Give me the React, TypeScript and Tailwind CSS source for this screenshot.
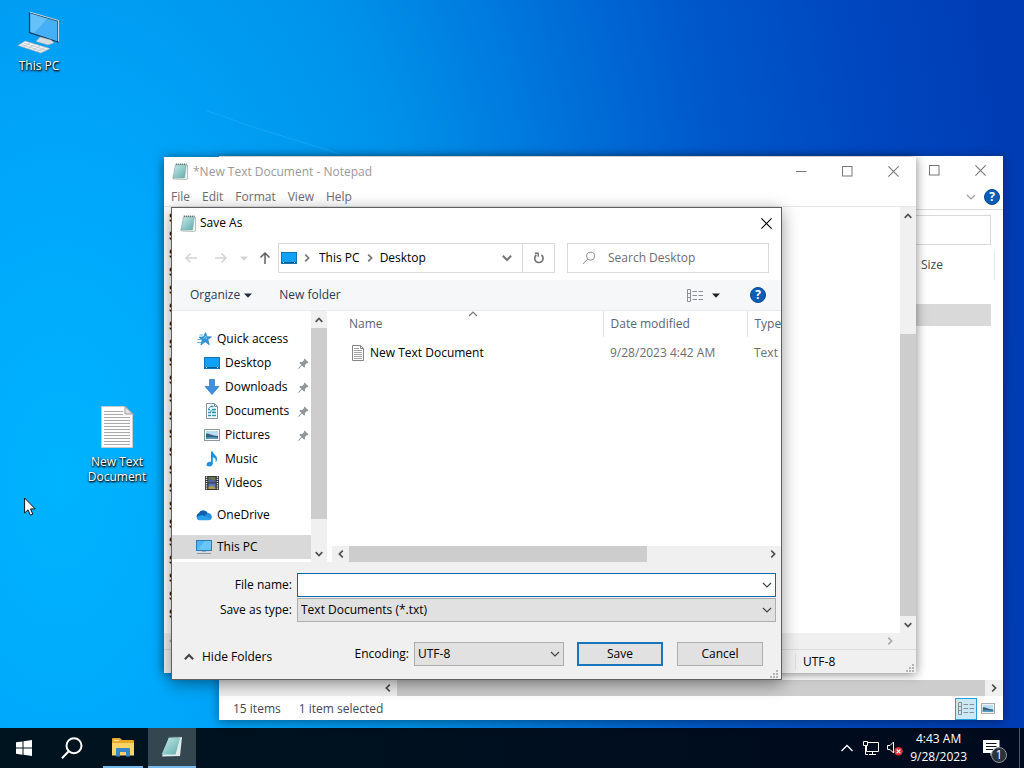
import { ReactNode, useState } from "react";

type IconProps = { className?: string };

type Place = {
  name: string;
  icon: ReactNode;
  pinned?: boolean;
};

// Small line icons

function Chevron({ className = "" }: IconProps) {
  return (
    <svg viewBox="0 0 8 8" className={`h-2 w-2 shrink-0 ${className}`} fill="none" stroke="currentColor">
      <path d="M0.7 2.2 L4 5.6 L7.3 2.2" strokeWidth="1.7" />
    </svg>
  );
}

function ThinChevron({ className = "" }: IconProps) {
  return (
    <svg viewBox="0 0 10 10" className={`h-2.5 w-2.5 shrink-0 ${className}`} fill="none" stroke="currentColor">
      <path d="M1 3 L5 7 L9 3" strokeWidth="1.2" />
    </svg>
  );
}

function Arrow({ className = "" }: IconProps) {
  return (
    <svg viewBox="0 0 14 14" className={`h-3.5 w-3.5 shrink-0 ${className}`} fill="none" stroke="currentColor">
      <path d="M13 7 H2 M6.5 2.5 L2 7 L6.5 11.5" strokeWidth="1.5" />
    </svg>
  );
}

function Triangle({ className = "" }: IconProps) {
  return (
    <svg viewBox="0 0 8 5" className={`h-[5px] w-2 shrink-0 ${className}`} fill="currentColor">
      <path d="M0 0.5 H8 L4 4.7 Z" />
    </svg>
  );
}

function MinimizeIcon() {
  return (
    <svg viewBox="0 0 11 11" className="h-[11px] w-[11px]" stroke="currentColor">
      <path d="M0 5.5 H10.5" />
    </svg>
  );
}

function MaximizeIcon() {
  return (
    <svg viewBox="0 0 11 11" className="h-[11px] w-[11px]" fill="none" stroke="currentColor">
      <rect x="0.5" y="0.5" width="9.5" height="9.5" />
    </svg>
  );
}

function CloseIcon() {
  return (
    <svg viewBox="0 0 11 11" className="h-[11px] w-[11px]" fill="none" stroke="currentColor">
      <path d="M0.4 0.4 L10.6 10.6 M10.6 0.4 L0.4 10.6" strokeWidth="1.1" />
    </svg>
  );
}

function RefreshIcon() {
  return (
    <svg viewBox="0 0 12 12" className="h-3 w-3" fill="none" stroke="#707070">
      <path d="M8.4 3 A4.2 4.2 0 1 1 3.4 3" strokeWidth="1.6" />
      <path d="M1.8 1.2 H5.2 V4.8" strokeWidth="1.4" />
    </svg>
  );
}

function SearchIcon() {
  return (
    <svg viewBox="0 0 14 14" className="h-3.5 w-3.5 shrink-0" fill="none" stroke="#8a8a8a">
      <circle cx="8.6" cy="5.2" r="4" />
      <path d="M5.7 8.2 L1 12.8" />
    </svg>
  );
}

function DetailsIcon() {
  return (
    <svg viewBox="0 0 16 13" className="h-[13px] w-4" fill="none" stroke="#8b8e93">
      <path d="M0.5 0.5 H3.5 V12.5 H0.5 Z M0.5 4.5 H3.5 M0.5 8.5 H3.5" />
      <path d="M5.5 2.5 H10 M11.5 2.5 H16 M5.5 6.5 H10 M11.5 6.5 H16 M5.5 10.5 H10 M11.5 10.5 H16" />
    </svg>
  );
}

function HelpIcon() {
  return (
    <span className="flex h-4 w-4 items-center justify-center rounded-full border border-[#084a92] bg-[#0b5cb5] text-xs leading-none font-bold text-white">
      ?
    </span>
  );
}

function PinIcon() {
  return (
    <svg viewBox="0 0 11 11" className="h-[11px] w-[11px] shrink-0" fill="#8f979d">
      <path d="M6.5 0.5 L10.5 4.5 L9.6 5.2 L8.9 4.9 L7 6.9 L7 9 L6.2 9.7 L4 7.5 L1 10.7 L0.3 10.7 L0.3 10 L3.5 7 L1.4 4.8 L2.1 4 L4.2 4 L6.1 2.1 L5.8 1.3 Z" />
    </svg>
  );
}

function GripIcon() {
  return (
    <svg viewBox="0 0 9 9" className="h-[9px] w-[9px]" fill="#b4b4b4">
      <path d="M6 0h2v2H6zM6 3h2v2H6zM6 6h2v2H6zM3 3h2v2H3zM3 6h2v2H3zM0 6h2v2H0z" />
    </svg>
  );
}

// File and place icons

function NotepadIcon({ className = "h-[17px] w-4" }: IconProps) {
  return (
    <svg viewBox="0 0 16 17" className={`shrink-0 ${className}`}>
      <defs>
        <linearGradient id="pad" x1="0" y1="0" x2="1" y2="1">
          <stop offset="0" stopColor="#c9ecec" />
          <stop offset="1" stopColor="#5faaa9" />
        </linearGradient>
      </defs>
      <path d="M4 2 L15.5 2 L15.5 16 L13 16.5 L1 16 Z" fill="#f4f7f4" stroke="#8b9a98" strokeWidth="0.6" />
      <path d="M3.5 2 L14.3 2 L12.6 15 L0.8 15 Z" fill="url(#pad)" stroke="#7fa5a4" strokeWidth="0.5" />
      <path d="M3.8 1.2 H14.5" stroke="#4c5c5c" strokeWidth="1.6" strokeDasharray="1 1" />
    </svg>
  );
}

function DesktopIcon() {
  return (
    <svg viewBox="0 0 16 12" className="h-3 w-4 shrink-0">
      <rect x="0.5" y="0.5" width="15" height="11" fill="#12a2f5" stroke="#1274b4" />
      <path d="M1 10.5 H15" stroke="#0b5a90" />
      <path d="M2 10.5 h1 m10 0 h1" stroke="#fff" />
    </svg>
  );
}

function QuickAccessIcon() {
  return (
    <svg viewBox="0 0 16 16" className="h-4 w-4 shrink-0">
      <path d="M9.6 1.5 L11 5.8 H15.5 L11.9 8.6 L13.3 13.8 L9.2 10.8 L4.8 14 L6.2 9 L3 6.2 L7.6 5.8 Z" fill="#2e97dd" stroke="#1c79b9" strokeWidth="0.6" />
      <path d="M3.5 4 H7 M1.5 8.5 H5 M1 11.5 H5" stroke="#65b7e9" />
      <path d="M7.5 8 L9.6 5 L10.8 8.2" fill="none" stroke="#8fd0f5" strokeWidth="0.8" />
    </svg>
  );
}

function DownloadsIcon() {
  return (
    <svg viewBox="0 0 16 16" className="h-4 w-4 shrink-0">
      <path d="M5.5 0.5 H10.5 V7.5 H15 L8 15.5 L1 7.5 H5.5 Z" fill="#3f8fe0" stroke="#2d74bd" strokeWidth="0.7" />
    </svg>
  );
}

function DocumentsIcon() {
  return (
    <svg viewBox="0 0 16 16" className="h-4 w-4 shrink-0" fill="none">
      <path d="M2.5 0.5 H10.5 L13.5 3.5 V15.5 H2.5 Z" fill="#fafcfd" stroke="#83919b" />
      <path d="M10.5 0.5 V3.5 H13.5" stroke="#83919b" />
      <path d="M7 3.5 H9.5 M4 6.5 H6 M8 6.5 H12 M4 9.5 H7 M8 9.5 H12 M4 12.5 H7 M8 12.5 H12" stroke="#2f93b3" strokeWidth="1.3" />
      <path d="M4.5 5.5 L7.5 3 M6 8 H8.5 M10 7.5 V9" stroke="#3a97b5" />
    </svg>
  );
}

function PicturesIcon({ className = "h-3 w-4" }: IconProps) {
  return (
    <svg viewBox="0 0 16 12" className={`shrink-0 ${className}`}>
      <rect x="0.5" y="0.5" width="15" height="11" fill="#fff" stroke="#8c979f" />
      <rect x="2" y="2" width="12" height="8" fill="#b9ddf4" />
      <path d="M2 4.5 C5 4 7 6.5 14 7 V10 H2 Z" fill="#36647f" />
      <path d="M2 8.5 C6 7.5 9 8 14 8.7 V10 H2 Z" fill="#5a9bc6" />
    </svg>
  );
}

function MusicIcon() {
  return (
    <svg viewBox="0 0 16 16" className="h-4 w-4 shrink-0" fill="#1b8fe0">
      <path d="M7 0.5 H8.8 C9 3.5 13.5 4.5 13 8.5 C12.8 10 12 11 11.5 11.5 C12.5 8.5 11.3 7 8.8 6 V12.5 C8.8 14.5 7 15.5 5.2 15.5 C3.5 15.5 2.5 14.5 2.6 13.2 C2.8 11.5 5 10.5 7 11 Z" />
    </svg>
  );
}

function VideosIcon() {
  return (
    <svg viewBox="0 0 16 16" className="h-4 w-4 shrink-0">
      <rect x="1" y="1" width="14" height="14" fill="#33373d" />
      <path d="M2.5 1.5 V15 M13.5 1.5 V15" stroke="#e8e8e8" strokeWidth="1.4" strokeDasharray="1.2 1" />
      <rect x="4.5" y="2" width="7" height="5.3" fill="#6d7a3c" />
      <path d="M4.5 5 L7 3 L9 6 L11.5 4 V7.3 H4.5 Z" fill="#4860a8" />
      <rect x="4.5" y="8.5" width="7" height="5.5" fill="#5877c4" />
      <path d="M4.5 12 L8 10.5 L11.5 13 V14 H4.5 Z" fill="#b49a3f" />
    </svg>
  );
}

function OneDriveIcon() {
  return (
    <svg viewBox="0 0 16 16" className="h-4 w-4 shrink-0">
      <path d="M3.4 13 A3.7 3.7 0 0 1 2.8 6 A4.9 4.9 0 0 1 11.6 5.8 L12 9 L8 12 Z" fill="#0f5fb0" />
      <path d="M8 9.5 L11.5 6.2 A3.5 3.5 0 0 1 15.8 9.8 A3.3 3.3 0 0 1 12.5 13 Z" fill="#1f8fe0" />
      <path d="M0.7 11.2 C2.5 7.8 6.5 7.6 9 9.3 L14.8 12 Q14 13.2 12.5 13.2 H3.6 Q1.4 13 0.7 11.2 Z" fill="#2aa0ea" />
    </svg>
  );
}

function ThisPcIcon() {
  return (
    <svg viewBox="0 0 16 16" className="h-4 w-4 shrink-0">
      <rect x="0.5" y="1.5" width="15" height="10" fill="#4db4f2" stroke="#2c7cb4" />
      <path d="M1 11 L9 2 H15 V11 Z" fill="#7fd0fa" opacity="0.6" />
      <path d="M1 14.5 H15" stroke="#8a99a3" />
      <path d="M6 12.5 H10" stroke="#8fb3c8" />
    </svg>
  );
}

function TextFileIcon() {
  return (
    <svg viewBox="0 0 14 16" className="h-4 w-3.5 shrink-0" fill="none">
      <path d="M1.5 0.5 H9.5 L12.5 3.5 V15.5 H1.5 Z" fill="#fff" stroke="#858585" />
      <path d="M9.5 0.5 V3.5 H12.5" stroke="#858585" />
      <path d="M3 3.5 H8 M3 5.5 H11 M3 7.5 H11 M3 9.5 H11 M3 11.5 H11 M3 13.5 H11" stroke="#a2a2a2" />
    </svg>
  );
}

function BigComputerIcon() {
  return (
    <svg viewBox="0 0 44 44" className="h-11 w-11">
      <path d="M12.5 2.5 L41 11 L41 32 L12.5 22.5 Z" fill="#45b0f5" stroke="#20394c" strokeWidth="1.2" />
      <path d="M13.5 3.8 L30 8.8 L17 23 L13.5 21.8 Z" fill="#7dcdfc" opacity="0.6" />
      <path d="M12.5 2 L41.5 10.5 V31.5" fill="none" stroke="#d5e2ea" strokeWidth="0.9" />
      <path d="M23 27 L34 30 L37 33 L31 35 L19 31.5 Z" fill="#d6dde2" stroke="#97a6b0" strokeWidth="0.5" />
      <path d="M8 31 L33 38.5 L24 43 L1 35.5 Z" fill="#f0f2f3" stroke="#a6afb5" strokeWidth="0.6" />
      <path d="M6.5 33 L29 40 M4 34.5 L26.5 41.5 M13 33 L6 37 M18 34.5 L11 38.5 M23 36 L16 40 M28 37.5 L20 41.5" stroke="#b9c1c6" strokeWidth="0.7" />
    </svg>
  );
}

function BigTextFileIcon() {
  return (
    <svg viewBox="0 0 32 42" className="h-[42px] w-8" fill="none">
      <path d="M0.5 0.5 H24 L31.5 8 V41.5 H0.5 Z" fill="#fcfcfc" stroke="#c9c9c9" />
      <path d="M24 0.5 V8 H31.5 Z" fill="#e4e4e4" stroke="#9b9b9b" />
      <path d="M3 5.5 H22 M3 8.5 H22 M3 11.5 H29 M3 14.5 H29 M3 17.5 H29 M3 20.5 H29 M3 23.5 H29 M3 26.5 H29 M3 29.5 H29 M3 32.5 H29 M3 35.5 H29 M3 38.5 H29" stroke="#a9a9a9" />
    </svg>
  );
}

// Window pieces

function CaptionButton({ label, children }: { label: string; children: ReactNode }) {
  return (
    <button aria-label={label} className="flex w-[46px] items-center justify-center">
      {children}
    </button>
  );
}

function Explorer() {
  return (
    <section
      aria-label="File Explorer"
      className="absolute top-[156px] right-[21px] bottom-2 left-[219px] flex flex-col bg-white text-[#43474f] shadow-[0_2px_10px_rgba(0,0,0,0.4)]"
    >
      <div className="flex h-7 justify-end text-[#777]">
        <CaptionButton label="Minimize"><MinimizeIcon /></CaptionButton>
        <CaptionButton label="Maximize"><MaximizeIcon /></CaptionButton>
        <CaptionButton label="Close"><CloseIcon /></CaptionButton>
      </div>
      <div className="flex h-[26px] items-center justify-end gap-2 border-b border-[#dadbdc] pr-[3px]">
        <button aria-label="Expand the ribbon" className="text-[#999]"><ThinChevron /></button>
        <button aria-label="Help"><HelpIcon /></button>
      </div>
      <div className="flex h-10 items-center justify-end pr-3">
        <input aria-label="Search" className="h-[30px] w-60 border border-[#d9d9d9]" />
      </div>
      <div className="mr-2 flex h-[30px] items-center justify-end border-r border-[#e0eaf3]">
        <span className="w-[73px]">Size</span>
      </div>
      <div className="mt-6 mr-3 ml-44 h-[22px] bg-[#d9d9d9]" />
      <div className="flex-1" />
      <div className="flex h-4 shrink-0 items-center bg-[#f0f0f0] pl-40 text-[#505050]">
        <button aria-label="Scroll left" className="flex w-[18px] justify-center"><Chevron className="rotate-90" /></button>
        <div className="h-full flex-1 bg-[#cdcdcd]" />
        <button aria-label="Scroll right" className="flex w-[18px] justify-center"><Chevron className="-rotate-90" /></button>
      </div>
      <div className="flex h-6 shrink-0 items-center pt-px pr-1 pl-3.5">
        <span className="mr-[18px]">15 items</span>
        <span>1 item selected</span>
        <button aria-label="Details view" className="ml-auto flex h-[22px] w-[22px] items-center justify-center border border-[#26a0da] bg-[#cbe8f6]">
          <DetailsIcon />
        </button>
        <button aria-label="Icon view" className="flex h-[22px] w-[22px] items-center justify-center">
          <PicturesIcon className="h-[11px] w-3.5" />
        </button>
      </div>
    </section>
  );
}

const noteText = Array(23).fill("s").join("\n");

function Notepad() {
  return (
    <section
      aria-label="Notepad"
      className="absolute top-[157px] right-[108px] bottom-[55px] left-[164px] flex flex-col bg-white shadow-[0_1px_10px_rgba(0,0,0,0.5)]"
    >
      <div className="flex h-[29px] shrink-0 text-[#999]">
        <div className="flex items-center gap-[5px] pl-2">
          <NotepadIcon />
          <span>*New Text Document - Notepad</span>
        </div>
        <div className="ml-auto flex text-[#777]">
          <CaptionButton label="Minimize"><MinimizeIcon /></CaptionButton>
          <CaptionButton label="Maximize"><MaximizeIcon /></CaptionButton>
          <CaptionButton label="Close"><CloseIcon /></CaptionButton>
        </div>
      </div>
      <nav className="flex h-[21px] shrink-0 items-center gap-3 border-b border-[#e8e8e8] pt-0.5 pl-[7px] text-[#6d6d6d]">
        <button>File</button>
        <button>Edit</button>
        <button>Format</button>
        <button>View</button>
        <button>Help</button>
      </nav>
      <div className="flex min-h-0 flex-1">
        <textarea
          aria-label="Text"
          className="flex-1 resize-none overflow-hidden bg-white px-1 pt-0.5 font-['Liberation_Mono',monospace] text-base leading-[18px] text-black outline-none"
          defaultValue={noteText}
        />
        <div className="flex w-4 flex-col bg-[#f0f0f0] text-[#505050]">
          <button aria-label="Scroll up" className="flex h-[17px] items-center justify-center"><Chevron className="rotate-180" /></button>
          <div className="flex-[110]" />
          <div className="flex-[282] bg-[#cdcdcd]" />
          <button aria-label="Scroll down" className="flex h-[17px] items-center justify-center"><Chevron /></button>
        </div>
      </div>
      <div className="flex h-[17px] shrink-0 items-center justify-between border-b border-[#dcdcdc] bg-[#f0f0f0] pr-[22px] pl-1 text-[#aaa]">
        <Chevron className="rotate-90" />
        <Chevron className="-rotate-90" />
      </div>
      <footer className="flex h-[23px] shrink-0 items-center justify-end bg-[#f0f0f0] pt-px">
        <span className="w-[111px] border-l border-[#dcdcdc] pl-[7px]">UTF-8</span>
        <span className="mr-px self-end"><GripIcon /></span>
      </footer>
    </section>
  );
}

const places: Place[] = [
  { name: "Desktop", icon: <DesktopIcon />, pinned: true },
  { name: "Downloads", icon: <DownloadsIcon />, pinned: true },
  { name: "Documents", icon: <DocumentsIcon />, pinned: true },
  { name: "Pictures", icon: <PicturesIcon />, pinned: true },
  { name: "Music", icon: <MusicIcon /> },
  { name: "Videos", icon: <VideosIcon /> },
];

function SaveAsDialog() {
  const [fileName, setFileName] = useState("");

  return (
    <section
      role="dialog"
      aria-label="Save As"
      className="absolute top-[207px] right-[242px] bottom-[48px] left-[171px] flex flex-col border border-[#5f5f5f] bg-[#f0f0f0] text-black shadow-[0_4px_16px_rgba(0,0,0,0.4)]"
    >
      <div className="flex h-[30px] shrink-0 items-center bg-white pl-2">
        <NotepadIcon />
        <h1 className="ml-1">Save As</h1>
        <button aria-label="Close" className="ml-auto flex w-[30px] justify-center"><CloseIcon /></button>
      </div>

      <div className="flex h-10 shrink-0 items-center bg-white px-3">
        <button aria-label="Back" className="mr-4 text-[#d4d4d4]"><Arrow /></button>
        <button aria-label="Forward" className="mr-3 text-[#d4d4d4]"><Arrow className="rotate-180" /></button>
        <button aria-label="Recent locations" className="mr-2.5 text-[#d4d4d4]"><Triangle /></button>
        <button aria-label="Up" className="mr-1.5 text-[#606060]"><Arrow className="rotate-90" /></button>
        <div className="flex h-[30px] flex-1 items-center border border-[#d9d9d9] pl-0.5">
          <DesktopIcon />
          <Chevron className="mr-2 ml-1.5 -rotate-90 text-[#777]" />
          <button>This PC</button>
          <Chevron className="mx-1.5 -rotate-90 text-[#777]" />
          <button>Desktop</button>
          <button aria-label="Previous locations" className="ml-auto flex w-[30px] justify-center text-[#777]"><Chevron className="h-2.5 w-2.5" /></button>
          <button aria-label="Refresh" className="flex h-full w-8 items-center justify-center border-l border-[#d9d9d9]"><RefreshIcon /></button>
        </div>
        <label className="ml-3 flex h-[30px] w-[202px] items-center gap-3 border border-[#d9d9d9] pl-3.5">
          <SearchIcon />
          <input placeholder="Search Desktop" aria-label="Search Desktop" className="w-full min-w-0 outline-none placeholder:text-[#6d6d6d]" />
        </label>
      </div>

      <div className="flex h-[33px] shrink-0 bg-white pt-0.5">
        <div className="flex flex-1 items-center border-b border-[#e8ebee] bg-[#f5f7f8] pr-[15px] pl-[18px] text-[#2b3a52]">
          <button className="mr-[27px] flex items-center gap-1">
            Organize <Triangle className="text-[#222f40]" />
          </button>
          <button>New folder</button>
          <button aria-label="Change your view" className="mr-[30px] ml-auto flex items-center gap-[9px]">
            <DetailsIcon />
            <Triangle className="text-[#222]" />
          </button>
          <button aria-label="Help"><HelpIcon /></button>
        </div>
      </div>

      <div className="flex min-h-0 flex-1 bg-white">
        <nav className="flex w-[139px] shrink-0 flex-col pt-4">
          <a href="#quick" className="flex h-6 shrink-0 items-center gap-[5px] pl-6">
            <QuickAccessIcon /> Quick access
          </a>
          {places.map((place) => (
            <a key={place.name} href="#place" className="flex h-6 shrink-0 items-center gap-[5px] pl-8">
              {place.icon}
              <span className="flex-1">{place.name}</span>
              {place.pinned && <span className="mr-0.5"><PinIcon /></span>}
            </a>
          ))}
          <a href="#onedrive" className="mt-2 flex h-6 shrink-0 items-center gap-[5px] pl-6">
            <OneDriveIcon /> OneDrive
          </a>
          <a href="#pc" className="mt-2 flex h-6 shrink-0 items-center gap-[5px] bg-[#d9d9d9] pl-6">
            <ThisPcIcon /> This PC
          </a>
        </nav>
        <div className="flex w-4 shrink-0 flex-col bg-[#f0f0f0] text-[#505050]">
          <button aria-label="Scroll up" className="flex h-[17px] items-center justify-center"><Chevron className="rotate-180" /></button>
          <div className="flex-[191] bg-[#cdcdcd]" />
          <div className="flex-[26]" />
          <button aria-label="Scroll down" className="flex h-[17px] items-center justify-center"><Chevron /></button>
        </div>
        <div className="flex min-w-0 flex-1 flex-col">
          <div className="min-h-0 flex-1 overflow-hidden">
            <table className="w-[620px] table-fixed text-left">
              <thead className="text-[#5a6376]">
                <tr className="h-[26px]">
                  <th className="relative w-[276px] border-r border-[#e5e5e5] pl-[22px] font-normal">
                    Name
                    <ThinChevron className="absolute -top-0.5 left-[141px] rotate-180 text-[#777]" />
                  </th>
                  <th className="w-36 border-r border-[#e5e5e5] pl-[7px] font-normal">Date modified</th>
                  <th className="pl-[7px] font-normal">Type</th>
                </tr>
              </thead>
              <tbody className="text-[#6d6d6d]">
                <tr className="h-8">
                  <td className="pl-6 text-black">
                    <span className="flex items-center gap-[5px]"><TextFileIcon /> New Text Document</span>
                  </td>
                  <td className="pl-[7px]">9/28/2023 4:42 AM</td>
                  <td className="pl-[7px]">Text Document</td>
                </tr>
              </tbody>
            </table>
          </div>
          <div className="ml-[5px] flex h-4 shrink-0 items-center bg-[#f0f0f0] text-[#505050]">
            <button aria-label="Scroll left" className="flex w-[17px] justify-center"><Chevron className="rotate-90" /></button>
            <div className="h-full flex-[298] bg-[#cdcdcd]" />
            <div className="flex-[117]" />
            <button aria-label="Scroll right" className="flex w-[17px] justify-center"><Chevron className="-rotate-90" /></button>
          </div>
        </div>
      </div>

      <div className="shrink-0 pt-[11px] pr-[5px]">
        <div className="flex items-center">
          <label htmlFor="file-name" className="w-[125px] pr-[5px] text-right">File name:</label>
          <div className="flex h-6 flex-1 items-center border border-[#0067b0] bg-white">
            <input
              id="file-name"
              className="h-full min-w-0 flex-1 px-1 outline-none"
              value={fileName}
              onChange={(e) => setFileName(e.target.value)}
            />
            <button aria-label="Previous file names" className="mr-[3px] text-[#444]"><ThinChevron /></button>
          </div>
        </div>
        <div className="mt-px flex items-center">
          <label htmlFor="file-type" className="w-[125px] pr-[5px] text-right">Save as type:</label>
          <div className="relative flex-1">
            <select id="file-type" className="block h-6 w-full appearance-none border border-[#adadad] bg-[#e1e1e1] px-[3px]">
              <option>Text Documents (*.txt)</option>
              <option>All Files</option>
            </select>
            <ThinChevron className="pointer-events-none absolute top-[7px] right-1 text-[#444]" />
          </div>
        </div>
      </div>

      <div className="relative flex h-[57px] shrink-0 items-center pt-[7px] pr-[18px] pl-3">
        <button className="mt-1.5 flex items-center gap-2">
          <Chevron className="h-2.5 w-2.5 rotate-180 text-[#444]" /> Hide Folders
        </button>
        <label htmlFor="encoding" className="mr-[5px] ml-auto">Encoding:</label>
        <div className="relative mr-[13px]">
          <select id="encoding" className="block h-6 w-[150px] appearance-none border border-[#adadad] bg-[#e1e1e1] px-[3px]">
            <option>UTF-8</option>
            <option>ANSI</option>
          </select>
          <ThinChevron className="pointer-events-none absolute top-[7px] right-1 text-[#444]" />
        </div>
        <button className="mr-3.5 h-6 w-[86px] border-2 border-[#1a74bd] bg-[#e1e1e1]">Save</button>
        <button className="h-6 w-[86px] border border-[#adadad] bg-[#e1e1e1]">Cancel</button>
        <span className="absolute right-0.5 bottom-0"><GripIcon /></span>
      </div>
    </section>
  );
}

function Taskbar() {
  return (
    <footer className="flex h-10 shrink-0 bg-linear-to-r from-[#00141f] to-[#000a1e] text-white">
      <button aria-label="Start" className="flex w-12 items-center justify-center">
        <svg viewBox="0 0 16 16" className="h-4 w-4" fill="#fff">
          <path d="M0 2.3 L6.5 1.4 V7.5 H0 Z M7.5 1.2 L16 0 V7.5 H7.5 Z M0 8.5 H6.5 V14.7 L0 13.8 Z M7.5 8.5 H16 V16 L7.5 14.8 Z" />
        </svg>
      </button>
      <button aria-label="Search" className="flex w-12 items-center justify-center">
        <svg viewBox="0 0 22 22" className="h-[22px] w-[22px]" fill="none" stroke="#fff" strokeWidth="2">
          <circle cx="13" cy="8.7" r="7.5" />
          <path d="M7.7 14.3 L1 21.2" />
        </svg>
      </button>
      <button aria-label="File Explorer" className="mr-px ml-[3px] flex w-12 items-center justify-center">
        <span className="flex h-full w-10 items-center justify-center border-b-2 border-[#76b9ed]">
          <svg viewBox="0 0 22 20" className="h-5 w-[22px]">
            <path d="M0 2 Q0 1 1 1 H8 L10 3 H21 Q22 3 22 4 V18 H0 Z" fill="#e5a92c" />
            <path d="M0 6 H22 V18.5 H0 Z" fill="#fcd367" />
            <path d="M4 19.5 V12 Q4 11 5 11 H17 Q18 11 18 12 V19.5 H14 V15 H8 V19.5 Z" fill="#3a87c8" />
            <path d="M2 3.5 H7" stroke="#fff0b8" />
          </svg>
        </span>
      </button>
      <button aria-label="Notepad" className="flex w-12 items-center justify-center border-b-2 border-[#76b9ed] bg-[#344750]">
        <svg viewBox="0 0 24 22" className="h-[22px] w-6">
          <path d="M9 2 L22 1 L20 20 L2 20.5 Z" fill="#dfeeed" />
          <path d="M9 1.5 L20.5 1 L15.5 18.5 L1.5 18.5 Z" fill="url(#pad)" />
          <path d="M8.5 1.3 L21 0.8" stroke="#52696b" strokeWidth="1.4" strokeDasharray="1 1" />
        </svg>
      </button>

      <div className="ml-auto flex items-center">
        <button aria-label="Show hidden icons" className="mr-2.5">
          <svg viewBox="0 0 12 8" className="h-2 w-3" fill="none" stroke="#fff" strokeWidth="1.3">
            <path d="M0.5 7 L6 1.5 L11.5 7" />
          </svg>
        </button>
        <button aria-label="Network" className="mr-2">
          <svg viewBox="0 0 16 14" className="h-3.5 w-4" fill="none" stroke="#fff">
            <path d="M5 1.5 H15.5 V10.5 H3.5 V5 M6 13.5 H13 M9.5 10.5 V13.5" />
            <path d="M0.5 0.5 H4.5 V4.5 H0.5 Z M2.5 4.5 V13.5 H5" />
          </svg>
        </button>
        <button aria-label="Volume muted" className="mr-[7px]">
          <svg viewBox="0 0 16 16" className="h-4 w-4" fill="none">
            <path d="M0.5 5.5 H3 L6.5 2 V13 L3 9.5 H0.5 Z" stroke="#fff" />
            <circle cx="11.5" cy="11.3" r="4.3" fill="#d9303a" />
            <path d="M9.7 9.5 L13.3 13.1 M13.3 9.5 L9.7 13.1" stroke="#fff" strokeWidth="1.1" />
          </svg>
        </button>
        <button className="text-center leading-[18px]">
          4:43 AM
          <br />
          9/28/2023
        </button>
        <button aria-label="Notifications" className="relative mr-[19px] ml-4">
          <svg viewBox="0 0 17 16" className="h-4 w-[17px]">
            <path d="M0 0 H16.5 V13 H10.5 L7.5 15.8 V13 H0 Z" fill="#fff" />
            <path d="M3 3.5 H13.5 M3 6.5 H13.5 M3 9.5 H10" stroke="#0a1524" strokeWidth="1.2" />
          </svg>
          <span className="absolute top-[7px] left-2 flex h-4 w-4 items-center justify-center rounded-full border border-[#8d949c] bg-[#2c323c] text-xs leading-none">
            1
          </span>
        </button>
        <div className="h-full w-[5px] border-l border-[#4c5562]" />
      </div>
    </footer>
  );
}

export default function App() {
  return (
    <div className="flex h-screen flex-col overflow-hidden font-['Open_Sans','Liberation_Sans',sans-serif] text-xs leading-4">
      <main className="relative min-h-0 flex-1 bg-[radial-gradient(1000px_1800px_at_60px_480px,#00b4ff_0%,#00a6fa_18%,#009cf2_28%,#0092ea_38%,#007ade_50%,#0068d4_59%,#0058ca_68%,#0048c0_82%,#003cb4_97%)]">
        {/* faint light beam behind the windows */}
        <svg viewBox="0 0 340 160" className="absolute top-0 left-0 h-40 w-[340px]" fill="none" stroke="#5ec3ff" opacity="0.25">
          <path d="M205 110 L250 126 L340 154" />
        </svg>

        <a href="#computer" className="absolute top-2.5 left-0 flex w-[78px] flex-col items-center text-white [text-shadow:0_1px_2px_#000,1px_1px_2px_#000]">
          <BigComputerIcon />
          <span className="mt-1">This PC</span>
        </a>
        <a href="#file" className="absolute top-[406px] left-[78px] flex w-[78px] flex-col items-center text-center leading-[15px] text-white [text-shadow:0_1px_2px_#000,1px_1px_2px_#000]">
          <BigTextFileIcon />
          <span className="mt-1.5">New Text Document</span>
        </a>

        <Explorer />
        <Notepad />
        <SaveAsDialog />

        <svg viewBox="0 0 12 19" className="pointer-events-none absolute top-[497px] left-6 h-[19px] w-3" fill="#fff" stroke="#000">
          <path d="M0.6 1 V16 L4 12.8 L6.4 18.2 L8.8 17.1 L6.5 11.9 H11.2 Z" strokeWidth="0.9" />
        </svg>
      </main>
      <Taskbar />
    </div>
  );
}
